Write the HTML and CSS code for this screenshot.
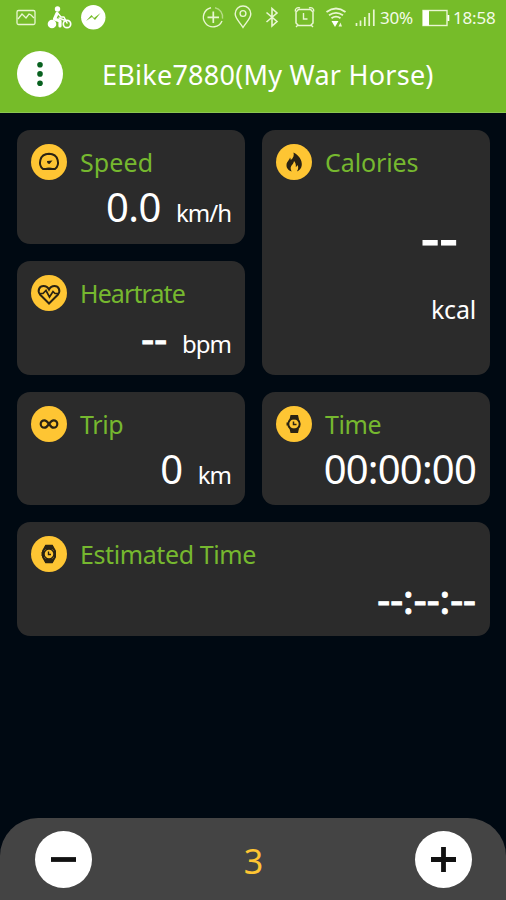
FILE: index.html
```html
<!DOCTYPE html>
<html lang="en">
<head>
    <meta charset="UTF-8">
    <meta name="viewport" content="width=device-width, initial-scale=1.0">
    <title>EBike Dashboard</title>
    <link rel="stylesheet" href="styles.css">
</head>
<body>
    <div id="app">
        <header>
            <div class="status-bar">
                <svg class="status-left" width="110" height="36" viewBox="0 0 110 36" fill="none" stroke="#e9f6d2" stroke-width="1.3">
                    <!-- picture -->
                    <rect x="17" y="10.5" width="18" height="14" rx="1.5"/>
                    <path d="M18 19l4-5 4 4 3-4 2 1 3 3"/>
                    <!-- cyclist -->
                    <g stroke="#fff" stroke-linecap="round" stroke-linejoin="round">
                        <circle cx="52" cy="24" r="4.3" fill="#fff" stroke="none"/>
                        <circle cx="67" cy="24" r="3.7" stroke-width="1.7"/>
                        <circle cx="57.5" cy="9" r="2.7" fill="#fff" stroke="none"/>
                        <path d="M57 13.5l-2.5 5.5 5.5 2 0 5" stroke-width="3.2"/>
                        <path d="M58 13.5l3 3.5h3l3 6M59 18l5 2" stroke-width="1.5"/>
                    </g>
                    <!-- messenger -->
                    <circle cx="93.3" cy="17.3" r="12.2" fill="#fff" stroke="none"/>
                    <path d="M86 21l5.5-6 2.5 3 6.5-5-5.5 7-3-3z" fill="#76bc29" stroke="none"/>
                </svg>
                <svg class="status-right" width="178" height="36" viewBox="200 0 178 36" fill="none" stroke="#e9f6d2" stroke-width="1.4">
                    <!-- data saver -->
                    <path d="M211 7.700a9.700 9.700 0 1 0 11 13.300"/>
                    <path d="M215 7.700a9.700 9.700 0 0 1 7.500 11" opacity=".55"/>
                    <path d="M213.300 11.500v11.500M207.500 17.300h11.500" stroke-width="1.700"/>
                    <!-- location -->
                    <path d="M243 27.500c-3-5-7.800-9-7.800-13.700a7.800 7.800 0 0 1 15.600 0c0 4.700-4.800 8.700-7.800 13.700z"/>
                    <circle cx="243" cy="13.500" r="2.900"/>
                    <!-- bluetooth -->
                    <path d="M266.500 12.500l10.500 9-5 4.500V8.500l5 4.500-10.500 9" stroke-width="1.600"/>
                    <!-- alarm -->
                    <path d="M298.500 9.500h12l2.500 2.500v11l-2.500 2.500h-12l-2.500-2.500V12z" stroke-width="1.500"/>
                    <path d="M295.300 11.500c-.5-3 2-4.500 4.700-3.500M313.700 11.500c.5-3-2-4.500-4.700-3.500M298 25l-2 2M311 25l2 2M303.500 13v6h4"/>
                    <!-- wifi -->
                    <path d="M326.500 12q9.500-7 19 0M329 15.300q7-5 14 0M331.500 18.300q4.500-3.400 9 0" stroke-width="1.800"/>
                    <path d="M331.500 21h7l-3.500 6z" fill="#fff" stroke="none"/>
                    <path d="M340.500 22.500l-2 4h3.500z" fill="#e9f6d2" stroke="none"/>
                    <!-- signal -->
                    <path d="M356.500 23v3M360.500 20.500v5.500M364.800 17v9M369.200 13v13M373.800 9.500v16.500" stroke-width="1.700"/>
                </svg>
                <span class="percent">30%</span>
                <svg class="battery" width="28" height="18" viewBox="0 0 28 18">
                    <rect x="1" y="1.500" width="24" height="15" fill="none" stroke="#e9f6d2" stroke-width="1.400"/>
                    <path d="M1 1.500h6v15h-6zM25.500 6h1.800v6h-1.800z" fill="#fff"/>
                </svg>
                <span class="clock">18:58</span>
            </div>
            <div class="title-bar">
                <button class="round menu" aria-label="Menu">
                    <svg width="46" height="46" viewBox="0 0 46 46" fill="#08611f">
                        <circle cx="23" cy="13.700" r="2.800"/>
                        <circle cx="23" cy="22.900" r="2.800"/>
                        <circle cx="23" cy="32.200" r="2.800"/>
                    </svg>
                </button>
                <h1>EBike7880(My War Horse)</h1>
            </div>
        </header>

        <main>
            <section class="card speed">
                <div class="card-head">
                    <svg class="icon" viewBox="0 0 36 36">
                        <path d="M12 25C7 21 8 10 18 9.800 28 10 29 21 24 25z"/>
                        <path d="M13.500 25.500q4.500-2.500 9 0" stroke-width="1.300"/>
                        <path class="solid" d="M16 17l5.500-.5-3 3.500q-2.500 0-2.500-3z"/>
                    </svg>
                    <h2>Speed</h2>
                </div>
                <p class="reading"><span class="value">0.0</span><span class="unit">km/h</span></p>
            </section>

            <section class="card calories">
                <div class="card-head">
                    <svg class="icon" viewBox="0 0 36 36">
                        <path class="solid" d="M17.500 8.500c5 2.500 8.800 7.500 8.300 12.500-.3 3-2 5.500-5 6.500 1.800-2.500 1.700-4.500.7-6.500-.5 1.200-1 1.800-1.700 2 .3-2.500-.3-4.500-1.800-6-.2 3-3.500 4.500-3.300 7.500 0 1.200.4 2 1 3-3.500-1-5.500-3.700-5.200-6.700.3-3.500 3-4.500 3.500-7.300.5.800.8 1.500.8 2.500 2.500-2 3.500-4.500 2.700-7.500z"/>
                    </svg>
                    <h2>Calories</h2>
                </div>
                <p class="big-value empty">--</p>
                <p class="unit">kcal</p>
            </section>

            <section class="card heartrate">
                <div class="card-head">
                    <svg class="icon" viewBox="0 0 36 36">
                        <path d="M18 28.500L9 19.500C6 15.500 8.500 11 12.500 11c2.500 0 4.500 1.500 5.500 3.500 1-2 3-3.500 5.500-3.500 4 0 6.500 4.500 3.500 8.500z"/>
                        <path d="M8.500 18.500H12l3-3 3.500 6.500 3.500-5.500 2 2h3.500" stroke-width="1.700"/>
                    </svg>
                    <h2>Heartrate</h2>
                </div>
                <p class="reading"><span class="value empty">--</span><span class="unit">bpm</span></p>
            </section>

            <section class="card">
                <div class="card-head">
                    <svg class="icon" viewBox="0 0 36 36">
                        <path d="M18 18c-1.800-2.600-3-3.700-4.600-3.700a3.700 3.700 0 0 0 0 7.400c1.600 0 2.800-1.100 4.600-3.700s3-3.700 4.600-3.700a3.700 3.700 0 0 1 0 7.400c-1.600 0-2.800-1.100-4.600-3.700z" stroke-width="2.200"/>
                    </svg>
                    <h2>Trip</h2>
                </div>
                <p class="reading"><span class="value">0</span><span class="unit">km</span></p>
            </section>

            <section class="card time">
                <div class="card-head">
                    <svg class="icon" viewBox="0 0 36 36">
                        <path class="solid" d="M14.500 9h7.500l1 4.500h-9.500zM14.500 27h7.500l1-4.500h-9.500zM10.500 16.500h2v3h-2z"/>
                        <circle cx="18" cy="18" r="5.700" stroke-width="2"/>
                        <path d="M17.500 15.500v3h3" stroke-width="1.500"/>
                    </svg>
                    <h2>Time</h2>
                </div>
                <p class="reading"><span class="value">00:00:00</span></p>
            </section>

            <section class="card wide">
                <div class="card-head">
                    <svg class="icon" viewBox="0 0 36 36">
                        <path d="M15 9.800h6l3 5.200v6l-3 5.200h-6l-3-5.200v-6z"/>
                        <path class="solid" d="M14.500 9h7l2 4.500h-11zM14.500 27h7l2-4.500h-11zM10.500 16h2v4h-2z"/>
                        <circle cx="18" cy="18" r="5" fill="#fec533" stroke-width="1.500"/>
                        <path d="M17.500 15.500v3h2.500" stroke-width="1.400"/>
                    </svg>
                    <h2>Estimated Time</h2>
                </div>
                <p class="reading"><span class="value empty">--:--:--</span></p>
            </section>
        </main>

        <footer>
            <button class="round" aria-label="Decrease">
                <svg width="57" height="57" viewBox="0 0 57 57" stroke="#111" stroke-width="4.800">
                    <path d="M16 28.500h25"/>
                </svg>
            </button>
            <span class="level">3</span>
            <button class="round" aria-label="Increase">
                <svg width="57" height="57" viewBox="0 0 57 57" stroke="#111" stroke-width="4.800">
                    <path d="M16 28.500h25M28.500 16v25"/>
                </svg>
            </button>
        </footer>
    </div>
</body>
</html>
```

FILE: styles.css
```css
* {
    box-sizing: border-box;
}
body {
    margin: 0;
    background-color: #000912;
    color: #fff;
    font-family: "Noto Sans", sans-serif;
}
h1, h2, p {
    margin: 0;
    font-weight: 400;
}
svg {
    display: block;
}
#app {
    display: flex;
    flex-direction: column;
    width: 506px;
    height: 900px;
    overflow: hidden;
}
header {
    height: 113px;
    background-color: #76bc29;
    border-bottom: 1px solid #8bc750;
}
.status-bar {
    display: flex;
    align-items: center;
    height: 36px;
}
.status-right {
    margin-left: 90px;
}
.percent, .clock {
    font-size: 17px;
    line-height: 36px;
    letter-spacing: -0.2px;
    color: #f4fbe8;
}
.percent {
    width: 35px;
    margin-left: 2px;
}
.battery {
    margin-left: 7px;
}
.clock {
    margin-left: 3px;
}
.title-bar {
    display: flex;
    align-items: center;
    height: 76px;
    padding: 0 17px;
}
.round {
    padding: 0;
    border: none;
    border-radius: 50%;
    background-color: #fff;
    cursor: pointer;
}
.title-bar h1 {
    margin-left: 39px;
    padding-top: 2px;
    font-size: 27px;
    line-height: 36px;
    letter-spacing: 0.25px;
    white-space: nowrap;
}
main {
    display: grid;
    grid-template-columns: 1fr 1fr;
    grid-auto-rows: 113.8px;
    gap: 17px;
    padding: 17px 16px 0 17px;
}
.card {
    display: flex;
    flex-direction: column;
    padding: 14px 14px 0;
    border-radius: 13px;
    background-color: #2b2b2b;
}
.calories {
    grid-row: span 2;
}
.wide {
    grid-column: span 2;
}
.card-head {
    display: flex;
    align-items: center;
    height: 36px;
}
.card-head h2 {
    margin-left: 13px;
    font-size: 25px;
    line-height: 36px;
    letter-spacing: -0.4px;
    color: #76b82f;
    white-space: nowrap;
}
.speed h2 {
    letter-spacing: 0.1px;
}
.calories h2 {
    letter-spacing: -0.1px;
}
.heartrate h2 {
    letter-spacing: -0.9px;
}
.icon {
    width: 36px;
    height: 36px;
    border-radius: 50%;
    background-color: #fec533;
    fill: none;
    stroke: #2a2314;
    stroke-width: 2;
}
.icon .solid {
    fill: #2a2314;
    stroke: none;
}
.reading {
    display: flex;
    justify-content: flex-end;
    align-items: baseline;
    line-height: 54px;
}
.value {
    font-size: 40px;
    letter-spacing: -0.5px;
}
.time .value {
    letter-spacing: -0.8px;
}
.empty {
    letter-spacing: 0;
    -webkit-text-stroke: 1px #fff;
}
.unit {
    margin-left: 15px;
    font-size: 24px;
    letter-spacing: -1px;
}
.big-value {
    margin-top: 21px;
    padding-right: 18px;
    font-size: 58px;
    line-height: 70px;
    text-align: right;
}
.calories .unit {
    margin-top: 18px;
    font-size: 25px;
    line-height: 40px;
    letter-spacing: -0.2px;
    text-align: right;
}
footer {
    display: flex;
    justify-content: space-between;
    align-items: center;
    height: 82px;
    margin-top: auto;
    padding: 1px 34px 0 35px;
    border-radius: 38px 38px 0 0;
    background-color: #444;
}
.level {
    padding-top: 2px;
    font-size: 34px;
    color: #fec533;
}
```
